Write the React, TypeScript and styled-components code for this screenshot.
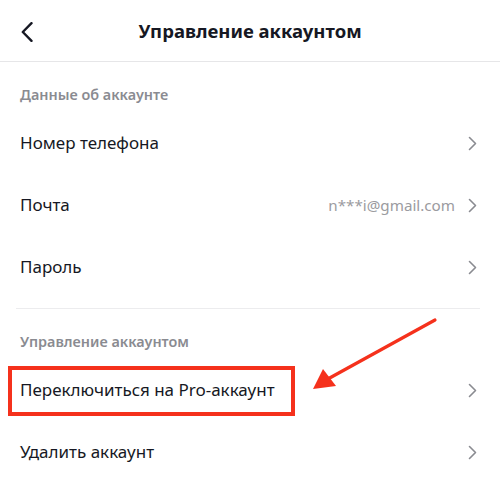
import React from 'react';
import styled, { createGlobalStyle } from 'styled-components';

type RowItem = {
  label: string;
  value?: string;
  marked?: boolean;
};

type Section = {
  title: string;
  items: RowItem[];
};

const sections: Section[] = [
  {
    title: 'Данные об аккаунте',
    items: [
      { label: 'Номер телефона' },
      { label: 'Почта', value: 'n***i@gmail.com' },
      { label: 'Пароль' },
    ],
  },
  {
    title: 'Управление аккаунтом',
    items: [
      { label: 'Переключиться на Pro-аккаунт', marked: true },
      { label: 'Удалить аккаунт' },
    ],
  },
];

const GlobalStyle = createGlobalStyle`
  body {
    margin: 0;
    background: #ffffff;
    font-family: 'Noto Sans', 'Liberation Sans', sans-serif;
    -webkit-font-smoothing: antialiased;
  }
`;

const BackIcon = () => (
  <svg width="12" height="20" viewBox="0 0 12 20" fill="none">
    <path d="M10.5 1.2 L1.8 10 L10.5 18.8" stroke="#161823" strokeWidth="2.4" strokeLinecap="round" strokeLinejoin="round" />
  </svg>
);

const ChevronIcon = () => (
  <svg width="9" height="15" viewBox="0 0 9 15" fill="none">
    <path d="M1.5 1.5 L7.5 7.5 L1.5 13.5" stroke="#8a8b91" strokeWidth="1.6" strokeLinecap="round" strokeLinejoin="round" />
  </svg>
);

const Arrow = () => (
  <ArrowLayer width="500" height="503" viewBox="0 0 500 503">
    <line x1="435" y1="320" x2="326" y2="380" stroke="#f5311c" strokeWidth="3.2" strokeLinecap="round" />
    <polygon points="313,389 323,369 336,386" fill="#f5311c" />
  </ArrowLayer>
);

const App = () => {
  return (
    <Page>
      <GlobalStyle />
      <Header>
        <BackButton>
          <BackIcon />
        </BackButton>
        <Title>Управление аккаунтом</Title>
        <span />
      </Header>
      {sections.map((section, i) => (
        <React.Fragment key={section.title}>
          {i > 0 && <Divider />}
          <Group last={i === sections.length - 1}>
            <GroupTitle>{section.title}</GroupTitle>
            {section.items.map(item => (
              <Row key={item.label}>
                {item.marked && <Frame />}
                <RowLabel>{item.label}</RowLabel>
                {item.value && <RowValue>{item.value}</RowValue>}
                <ChevronWrap>
                  <ChevronIcon />
                </ChevronWrap>
              </Row>
            ))}
          </Group>
        </React.Fragment>
      ))}
      <Arrow />
    </Page>
  );
};

const Page = styled.div`
  position: relative;
  width: 500px;
  height: 503px;
  overflow: hidden;
  background: #ffffff;
  color: #161823;
`;

const Header = styled.header`
  display: grid;
  grid-template-columns: 60px 1fr 60px;
  align-items: center;
  height: 61px;
  border-bottom: 1px solid #e6e6e8;
`;

const BackButton = styled.div`
  display: flex;
  align-items: center;
  padding-left: 21px;
  padding-top: 2px;
`;

const Title = styled.h1`
  margin: 0;
  text-align: center;
  font-size: 18.5px;
  font-weight: 700;
  letter-spacing: 0;
  line-height: 24px;
  padding-top: 1px;
`;

const Group = styled.section<{ last?: boolean }>`
  padding-bottom: ${props => (props.last ? 0 : 10)}px;
`;

const GroupTitle = styled.div`
  padding: 23px 20px 7px;
  font-size: 14.4px;
  font-weight: 600;
  line-height: 20px;
  color: #8a8b91;
`;

const Row = styled.div`
  position: relative;
  display: flex;
  align-items: center;
  height: 62px;
  padding: 0 23px 0 20px;
`;

const RowLabel = styled.span`
  font-size: 17px;
  line-height: 22px;
  color: #161823;
`;

const RowValue = styled.span`
  margin-left: auto;
  margin-right: 13px;
  font-size: 15.2px;
  line-height: 22px;
  color: #9b9ba0;
`;

const ChevronWrap = styled.span`
  display: flex;
  margin-left: auto;
  ${RowValue} + & {
    margin-left: 0;
  }
`;

const Divider = styled.div`
  height: 1px;
  margin: 0 20px 0 16px;
  background: #ececee;
`;

const Frame = styled.div`
  position: absolute;
  left: 8px;
  top: 7px;
  width: 287px;
  height: 50px;
  box-sizing: border-box;
  border: 4px solid #f5311c;
`;

const ArrowLayer = styled.svg`
  position: absolute;
  left: 0;
  top: 0;
  pointer-events: none;
`;

export default App;
